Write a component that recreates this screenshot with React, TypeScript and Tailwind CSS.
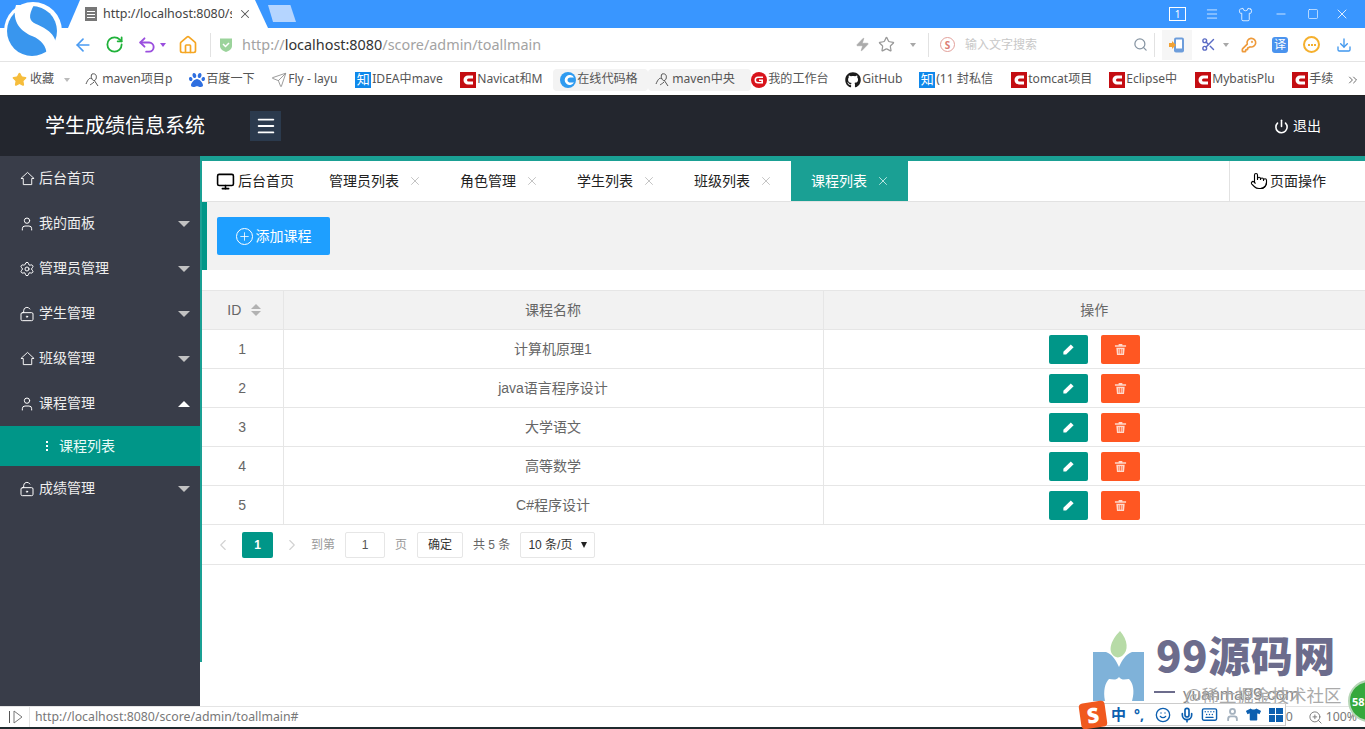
import type { ReactNode } from "react";
import {
  ArrowLeft,
  ChevronLeft,
  ChevronRight,
  ChevronsRight,
  Download,
  House,
  KeyRound,
  Keyboard,
  LockKeyholeOpen,
  Menu,
  Mic,
  Minus,
  Monitor,
  Plus,
  Pointer,
  Power,
  RotateCw,
  Scissors,
  Search,
  Send,
  Settings,
  Shirt,
  Smile,
  Square,
  Star,
  Undo2,
  User,
  X,
  Zap,
  ZoomIn,
} from "lucide-react";
import { FaGithub, FaPaw, FaTshirt } from "react-icons/fa";

const sans = "font-['Noto_Sans','Noto_Sans_CJK_SC',sans-serif]";

function Caret({ className = "border-t-[#a8a8a8]" }: { className?: string }) {
  return <span className={`block h-0 w-0 shrink-0 border-x-[3px] border-t-[4px] border-x-transparent ${className}`} />;
}

function SiteLogo() {
  return (
    <svg viewBox="0 0 66 62" className="absolute left-0 top-0 h-[62px] w-[66px]">
      <circle cx="33" cy="31" r="29" fill="#fff" />
      <circle cx="32" cy="31" r="25" fill="#3996ee" />
      <path
        d="M16 5C11 22 22 32 32 36c10 4 14 10 15 19l8-7c4-12-9-20-19-24-7-3-8-8-2-19z"
        fill="#fff"
      />
    </svg>
  );
}

function RedC() {
  return (
    <svg viewBox="0 0 16 16" className="h-4 w-4 shrink-0">
      <rect width="16" height="16" fill="#c40d12" />
      <path d="M13 3.500H8a4.500 4.500 0 0 0 0 9h5v-3H8.500a1.500 1.500 0 0 1 0-3H13z" fill="#fff" />
    </svg>
  );
}

function Zhi() {
  return (
    <span className="flex h-4 w-4 shrink-0 items-center justify-center bg-[#0f88eb] text-[13px] leading-none text-white">
      知
    </span>
  );
}

function Feather() {
  return (
    <svg viewBox="0 0 16 16" className="h-4 w-4 shrink-0" fill="none" stroke="#555" strokeWidth="1">
      <path d="M1 12c2-5 4-7 6-5M7 2c4-1 5 2 4 5-1 2-3 2-4 0s-1-4 0-5zM9 8l4 6M5 13c1-1 2-1 4-3" />
    </svg>
  );
}

function BlueC() {
  return (
    <svg viewBox="0 0 16 16" className="h-4 w-4 shrink-0">
      <circle cx="8" cy="8" r="8" fill="#2f9bf0" />
      <path d="M14 5.500A5 5 0 1 0 14 10.500h-3.200a2.600 2.600 0 1 1 0-5z" fill="#fff" />
    </svg>
  );
}

function RedG() {
  return (
    <svg viewBox="0 0 16 16" className="h-4 w-4 shrink-0">
      <circle cx="8" cy="8" r="8" fill="#d8141c" />
      <path d="M12 4.500H7a3.500 3.500 0 0 0 0 7h5V7.500H8v1.500h2.400v1H7a2 2 0 0 1 0-4h5z" fill="#fff" />
    </svg>
  );
}

function HomeOutline() {
  return (
    <svg viewBox="0 0 16 16" className="h-[15px] w-[15px]" fill="none" stroke="currentColor" strokeWidth="1">
      <path d="M8 1.500L1 8h2.500v6.500h9V8H15z" strokeLinejoin="round" />
    </svg>
  );
}

function EditIcon() {
  return (
    <svg viewBox="0 0 14 14" className="h-[13px] w-[13px]" fill="#fff">
      <path d="M9.500 1.500l3 3-8 8H1.500v-3z" />
    </svg>
  );
}

function TrashIcon() {
  return (
    <svg viewBox="0 0 14 14" className="h-[13px] w-[13px]">
      <path d="M1 2.500h12V4H1zM5 1h4v1.500H5z" fill="#ffd9cc" />
      <path d="M2.500 5h9l-.7 8H3.200z" fill="#ffd9cc" />
      <path d="M5.200 6.500v5M7 6.500v5M8.800 6.500v5" stroke="#ff5722" strokeWidth="0.800" />
    </svg>
  );
}

const bookmarks: { width: string; icon: ReactNode; label: string; pill?: boolean }[] = [
  { width: "w-[104px]", icon: <Feather />, label: "maven项目p" },
  { width: "w-[82px]", icon: <FaPaw className="h-4 w-4 shrink-0 text-[#2f6fe0]" />, label: "百度一下" },
  { width: "w-[84px]", icon: <Send className="h-4 w-4 shrink-0 text-[#888]" strokeWidth={1.25} />, label: "Fly - layu" },
  { width: "w-[105px]", icon: <Zhi />, label: "IDEA中mave" },
  { width: "w-[93px]", icon: <RedC />, label: "Navicat和M" },
  { width: "w-[95px]", icon: <BlueC />, label: "在线代码格", pill: true },
  { width: "w-[103px]", icon: <Feather />, label: "maven中央", pill: true },
  { width: "w-[94px]", icon: <RedG />, label: "我的工作台" },
  { width: "w-[74px]", icon: <FaGithub className="h-4 w-4 shrink-0 text-[#1b1b1b]" />, label: "GitHub" },
  { width: "w-[92px]", icon: <Zhi />, label: "(11 封私信" },
  { width: "w-[98px]", icon: <RedC />, label: "tomcat项目" },
  { width: "w-[86px]", icon: <RedC />, label: "Eclipse中" },
  { width: "w-[97px]", icon: <RedC />, label: "MybatisPlu" },
  { width: "w-[52px]", icon: <RedC />, label: "手续" },
];

function BrowserChrome() {
  return (
    <div className={`shrink-0 ${sans}`}>
      <div className="flex h-7 items-end bg-[#3996ff]">
        <div className="ml-[68px] flex h-7 w-[200px] items-center bg-white pl-[17px] pr-[17px] [clip-path:polygon(0_100%,6%_0,93.500%_0,100%_100%)]">
          <span className="flex h-[14px] w-[12px] shrink-0 flex-col justify-center gap-[2px] bg-[#777] px-[2px]">
            <span className="h-px bg-white" />
            <span className="h-px bg-white" />
            <span className="h-px bg-white" />
          </span>
          <span className="ml-[6px] w-[129px] shrink-0 overflow-hidden whitespace-nowrap text-[12.500px] text-[#444]">
            http://localhost:8080/score
          </span>
          <X className="ml-[6px] h-[14px] w-[14px] shrink-0 text-[#555]" strokeWidth={1.75} />
        </div>
        <span className="mb-[6px] h-[17px] w-[28px] bg-[#b5d5ff] [clip-path:polygon(0_0,80%_0,100%_100%,18%_100%)]" />
        <div className="mb-[7px] ml-auto flex h-[14px] items-center pr-[15px] text-white">
          <span className="flex h-[14px] w-[17px] items-center justify-center border border-white text-[10px] leading-none">
            1
          </span>
          <Menu className="ml-[19px] h-[14px] w-[14px]" strokeWidth={1.25} />
          <Shirt className="ml-[19px] h-[15px] w-[15px]" strokeWidth={1.25} />
          <Minus className="ml-[21px] h-[14px] w-[14px]" strokeWidth={1.25} />
          <Square className="ml-[19px] h-[12px] w-[12px]" strokeWidth={1.25} />
          <X className="ml-[15px] h-[16px] w-[16px]" strokeWidth={1.25} />
        </div>
      </div>

      <div className="flex h-[34px] items-center border-b border-[#e4e4e4] bg-white pl-[73px]">
        <ArrowLeft className="h-[20px] w-[20px] text-[#4a9bf2]" strokeWidth={2} />
        <RotateCw className="ml-[12px] h-[19px] w-[19px] text-[#20b23a]" strokeWidth={2.25} />
        <Undo2 className="ml-[13px] h-[20px] w-[20px] text-[#9a4ede]" strokeWidth={2.25} />
        <span className="ml-[3px]">
          <Caret className="border-t-[#9a4ede]" />
        </span>
        <House className="ml-[12px] h-[20px] w-[20px] text-[#f5a623]" strokeWidth={2} />
        <span className="ml-[12px] h-[24px] w-px bg-[#e2e2e2]" />
        <svg viewBox="0 0 16 16" className="ml-[7px] h-[16px] w-[16px] shrink-0">
          <path d="M2 1.500h12V9c0 3-3 5-6 6-3-1-6-3-6-6z" fill="#9bd39b" />
          <path d="M5 7l2.500 2.500L11 6" fill="none" stroke="#fff" strokeWidth="1.500" />
        </svg>
        <span className="ml-[8px] w-[300px] shrink-0 whitespace-nowrap text-[14.400px] text-[#a3a3a3]">
          http://<span className="text-[#333]">localhost:8080</span>/score/admin/toallmain
        </span>
        <Zap className="ml-[313px] h-[15px] w-[15px] fill-[#aaa] text-[#aaa]" strokeWidth={1} />
        <Star className="ml-[8px] h-[17px] w-[17px] text-[#999]" strokeWidth={1.75} />
        <span className="ml-[15px]">
          <Caret />
        </span>
        <span className="ml-[12px] h-[24px] w-px bg-[#e2e2e2]" />
        <span className="ml-[11px] flex h-[15px] w-[15px] items-center justify-center rounded-full border border-[#e2a09a] text-[10px] font-bold leading-none text-[#dc7d74]">
          S
        </span>
        <span className="ml-[10px] text-[12px] text-[#c8c8c8]">输入文字搜索</span>
        <Search className="ml-[96px] h-[15px] w-[15px] text-[#8795a3]" strokeWidth={2} />
        <span className="ml-[6px] h-[24px] w-px bg-[#e2e2e2]" />
        <span className="ml-[7px] flex h-[30px] w-[30px] items-center justify-center bg-[#f6f6f6]">
          <svg viewBox="0 0 16 16" className="h-[16px] w-[16px]">
            <rect x="5" y="0.500" width="10" height="15" rx="2" fill="#6d9ddb" />
            <rect x="7" y="2.500" width="6" height="9" fill="#fff" />
            <path d="M0 6h3V4l4 4-4 4v-2H0z" fill="#f1a236" />
          </svg>
        </span>
        <Scissors className="ml-[9px] h-[15px] w-[15px] text-[#5a6bc4]" strokeWidth={2.25} />
        <span className="ml-[7px]">
          <Caret />
        </span>
        <KeyRound className="ml-[12px] h-[16px] w-[16px] text-[#ee9a3a]" strokeWidth={2.5} />
        <span className="ml-[15px] flex h-[16px] w-[16px] items-center justify-center rounded-[3px] bg-[#4a93ee] text-[12px] leading-none text-white">
          译
        </span>
        <span className="ml-[15px] flex h-[17px] w-[17px] items-center justify-center gap-px rounded-full border-2 border-[#f5b02e]">
          <span className="h-[2px] w-[2px] bg-[#f5b02e]" />
          <span className="h-[2px] w-[2px] bg-[#f5b02e]" />
          <span className="h-[2px] w-[2px] bg-[#f5b02e]" />
        </span>
        <Download className="ml-[16px] h-[16px] w-[16px] text-[#3f97ee]" strokeWidth={2} />
      </div>

      <div className="flex h-[33px] items-center whitespace-nowrap bg-white pl-[12px] pt-[2px] text-[12.100px] text-[#555]">
        <Star className="h-[15px] w-[15px] shrink-0 fill-[#f6bd3c] text-[#f6bd3c]" />
        <span className="ml-[3px] shrink-0">收藏</span>
        <span className="ml-[10px] mr-[15px]">
          <Caret className="border-t-[#bbb]" />
        </span>
        {bookmarks.map((b) => (
          <div
            key={b.label}
            className={`${b.width} flex h-[22px] shrink-0 items-center gap-px overflow-hidden whitespace-nowrap ${
              b.pill ? "rounded-[4px] bg-[#f3f3f3] pl-[7px]" : ""
            }`}
          >
            {b.icon}
            <span>{b.label}</span>
          </div>
        ))}
        <ChevronsRight className="ml-[2px] h-[14px] w-[14px] shrink-0 text-[#555]" strokeWidth={1.5} />
      </div>
      <div className="h-px bg-[#222]" />
    </div>
  );
}

const sideItems: { label: string; icon: ReactNode; arrow?: "up" | "down" }[] = [
  { label: "后台首页", icon: <HomeOutline /> },
  { label: "我的面板", icon: <User className="h-[16px] w-[16px]" strokeWidth={1.5} />, arrow: "down" },
  { label: "管理员管理", icon: <Settings className="h-[16px] w-[16px]" strokeWidth={1.5} />, arrow: "down" },
  { label: "学生管理", icon: <LockKeyholeOpen className="h-[16px] w-[16px]" strokeWidth={1.5} />, arrow: "down" },
  { label: "班级管理", icon: <HomeOutline />, arrow: "down" },
  { label: "课程管理", icon: <User className="h-[16px] w-[16px]" strokeWidth={1.5} />, arrow: "up" },
];

function SideRow({ label, icon, arrow }: { label: string; icon: ReactNode; arrow?: "up" | "down" }) {
  return (
    <div className="flex h-[45px] items-center pl-[19px] pr-[10px] text-[14px] text-[#eee]">
      <span className="mr-[4px] flex w-[16px] justify-center text-white">{icon}</span>
      {label}
      {arrow === "down" && (
        <span className="ml-auto h-0 w-0 border-x-[6px] border-t-[6px] border-x-transparent border-t-[#c2c2c2]" />
      )}
      {arrow === "up" && (
        <span className="ml-auto h-0 w-0 border-x-[6px] border-b-[6px] border-x-transparent border-b-white" />
      )}
    </div>
  );
}

function Sidebar() {
  return (
    <aside className="w-[200px] shrink-0 bg-[#393d49]">
      {sideItems.map((item) => (
        <SideRow key={item.label} {...item} />
      ))}
      <div className="flex h-[40px] items-center bg-[#009688] pl-[46px] text-[14px] text-[#e8fbf8]">
        <span className="mr-[11px] flex flex-col gap-[2px]">
          <span className="h-[2px] w-[2px] bg-white" />
          <span className="h-[2px] w-[2px] bg-white" />
          <span className="h-[2px] w-[2px] bg-white" />
        </span>
        课程列表
      </div>
      <SideRow label="成绩管理" icon={<LockKeyholeOpen className="h-[16px] w-[16px]" strokeWidth={1.5} />} arrow="down" />
    </aside>
  );
}

const tabs: { label: string; width: string }[] = [
  { label: "管理员列表", width: "w-[131px]" },
  { label: "角色管理", width: "w-[117px]" },
  { label: "学生列表", width: "w-[117px]" },
  { label: "班级列表", width: "w-[97px]" },
];

function TabBar() {
  return (
    <div className="flex h-[41px] items-stretch border-b border-[#e2e2e2] text-[14px] text-[#222]">
      <div className="flex w-[127px] items-center pl-[14px]">
        <Monitor className="mr-[3px] h-[19px] w-[19px] text-black" strokeWidth={2} />
        后台首页
      </div>
      {tabs.map((t) => (
        <div key={t.label} className={`flex ${t.width} items-center`}>
          <span>{t.label}</span>
          <X className="ml-[9px] h-[14px] w-[14px] text-[#bbb]" strokeWidth={1.5} />
        </div>
      ))}
      <div className="flex w-[117px] items-center bg-[#1aa094] pl-[20px] text-white">
        课程列表
        <X className="ml-[9px] h-[14px] w-[14px] text-[#cdeee9]" strokeWidth={1.5} />
      </div>
      <div className="ml-auto flex w-[136px] items-center border-l border-[#e2e2e2] pl-[20px]">
        <Pointer className="mr-[2px] h-[18px] w-[18px] text-black" strokeWidth={1.5} />
        页面操作
      </div>
    </div>
  );
}

const courses = [
  { id: 1, name: "计算机原理1" },
  { id: 2, name: "java语言程序设计" },
  { id: 3, name: "大学语文" },
  { id: 4, name: "高等数学" },
  { id: 5, name: "C#程序设计" },
];

function CourseTable() {
  return (
    <table className="w-full table-fixed border-collapse text-center text-[14px] text-[#666]">
      <colgroup>
        <col className="w-[81px]" />
        <col className="w-[540px]" />
        <col />
      </colgroup>
      <thead>
        <tr className="h-[39px] border-y border-[#e6e6e6] bg-[#f2f2f2]">
          <th className="border-r border-[#e6e6e6] font-normal">
            <span className="ml-[4px] inline-flex items-center gap-[10px]">
              ID
              <span className="flex flex-col gap-[2px]">
                <span className="h-0 w-0 border-x-[5px] border-b-[5px] border-x-transparent border-b-[#b2b2b2]" />
                <span className="h-0 w-0 border-x-[5px] border-t-[5px] border-x-transparent border-t-[#b2b2b2]" />
              </span>
            </span>
          </th>
          <th className="border-r border-[#e6e6e6] font-normal">课程名称</th>
          <th className="font-normal">操作</th>
        </tr>
      </thead>
      <tbody>
        {courses.map((c) => (
          <tr key={c.id} className="h-[39px] border-b border-[#e6e6e6]">
            <td className="border-r border-[#e6e6e6]">{c.id}</td>
            <td className="border-r border-[#e6e6e6]">{c.name}</td>
            <td>
              <div className="flex items-center justify-center gap-[13px]">
                <span className="flex h-[29px] w-[39px] items-center justify-center rounded-[2px] bg-[#009688]">
                  <EditIcon />
                </span>
                <span className="flex h-[29px] w-[39px] items-center justify-center rounded-[2px] bg-[#ff5722]">
                  <TrashIcon />
                </span>
              </div>
            </td>
          </tr>
        ))}
      </tbody>
    </table>
  );
}

function Pagination() {
  return (
    <div className="flex h-[40px] items-center border-b border-[#e6e6e6] pl-[12px] text-[12px] text-[#999]">
      <ChevronLeft className="h-[18px] w-[18px] text-[#d2d2d2]" strokeWidth={1.5} />
      <span className="ml-[10px] flex h-[26px] w-[31px] items-center justify-center rounded-[2px] bg-[#009688] font-bold text-white">
        1
      </span>
      <ChevronRight className="ml-[10px] h-[18px] w-[18px] text-[#d2d2d2]" strokeWidth={1.5} />
      <span className="ml-[10px]">到第</span>
      <span className="ml-[10px] flex h-[26px] w-[40px] items-center justify-center rounded-[2px] border border-[#e6e6e6] text-[#555]">
        1
      </span>
      <span className="ml-[10px]">页</span>
      <span className="ml-[10px] flex h-[26px] w-[46px] items-center justify-center rounded-[2px] border border-[#e6e6e6] text-[#333]">
        确定
      </span>
      <span className="ml-[10px] text-[#666]">共 5 条</span>
      <span className="ml-[10px] flex h-[26px] w-[75px] items-center rounded-[2px] border border-[#e6e6e6] pl-[7px] text-[#333]">
        10 条/页
        <span className="ml-auto mr-[7px] h-0 w-0 border-x-[3.500px] border-t-[6px] border-x-transparent border-t-[#222]" />
      </span>
    </div>
  );
}

function Watermark() {
  return (
    <div className="pointer-events-none absolute bottom-[1px] right-0 h-[97px] w-[273px]">
      <svg viewBox="0 0 54 76" className="absolute left-0 top-0 h-[76px] w-[54px]">
        <path d="M28 0c8 9 9 20 2 25-2 1-4 2-6 1C15 22 18 10 28 0z" fill="#b7dba7" />
        <path d="M1 21h13c6 2 10 8 13 15 3-7 7-13 13-15h12v49H1z" fill="#7fb2d9" />
        <path d="M13 70c-2-10 0-18 4-22 3 0 7 2 10-2 3 4 7 2 10 2 4 4 6 12 3 22z" fill="#fff" />
      </svg>
      <span className="absolute left-[64px] top-[-2px] whitespace-nowrap font-['Noto_Sans_CJK_SC',sans-serif] text-[42px] font-black leading-[50px] tracking-[0.5px] text-[#6c6c8c]">
        99源码网
      </span>
      <span className="absolute left-[62px] top-[60px] h-[2px] w-[21px] bg-[#6c6c8c]" />
      <span className="absolute left-[91px] top-[52px] whitespace-nowrap text-[17px] leading-[24px] text-[#888]">
        yuanma99.com
      </span>
      <span className="absolute left-[93px] top-[52px] whitespace-nowrap font-['Noto_Sans_CJK_SC',sans-serif] text-[17.500px] leading-[24px] text-[#aaa]">
        @稀土掘金技术社区
      </span>
    </div>
  );
}

function StatusBar() {
  return (
    <div className={`relative flex h-[21px] shrink-0 items-center border-t border-[#e4e4e4] bg-white text-[12.300px] text-[#777] ${sans}`}>
      <span className="ml-[9px] h-[12px] w-px bg-[#555]" />
      <svg viewBox="0 0 10 14" className="ml-[3px] h-[14px] w-[10px]" fill="none" stroke="#777" strokeWidth="1">
        <path d="M1 1l8 6-8 6z" />
      </svg>
      <span className="ml-[6px] h-[20px] w-px bg-[#e4e4e4]" />
      <span className="ml-[5px]">http://localhost:8080/score/admin/toallmain#</span>
      <div className="ml-auto flex items-center pr-[8px] text-[#777]">
        <span className="mr-[15px]">0</span>
        <ZoomIn className="h-[15px] w-[15px]" strokeWidth={1.5} />
        <span className="ml-[3px]">100%</span>
      </div>
      <div className="absolute left-[1098px] top-[-4px] flex h-[23px] w-[188px] items-center border border-[#ccc] bg-white pl-[12px] text-[#0c5fb0]">
        <span className="text-[15px] font-bold leading-none">中</span>
        <span className="ml-[8px] text-[14px] font-bold leading-none">°,</span>
        <Smile className="ml-[11px] h-[16px] w-[16px]" strokeWidth={2} />
        <Mic className="ml-[8px] h-[16px] w-[16px]" strokeWidth={2.5} />
        <Keyboard className="ml-[6px] h-[17px] w-[17px]" strokeWidth={2} />
        <User className="ml-[7px] h-[15px] w-[15px] text-[#a5b2bf]" strokeWidth={3} />
        <FaTshirt className="ml-[6px] h-[15px] w-[15px]" />
        <span className="ml-[8px] grid h-[14px] w-[14px] grid-cols-2 gap-px">
          <span className="bg-[#0c5fb0]" />
          <span className="bg-[#0c5fb0]" />
          <span className="bg-[#0c5fb0]" />
          <span className="bg-[#0c5fb0]" />
        </span>
      </div>
      <span className="absolute left-[1080px] top-[-5px] flex h-[26px] w-[26px] rotate-[-8deg] items-center justify-center rounded-[4px] bg-[#f0591f] text-[21px] font-black leading-none text-white">
        S
      </span>
      <span className="absolute left-[1348px] top-[-27px] flex h-[42px] w-[42px] items-center rounded-full border-2 border-[#b7d6b7] bg-[#35a83c] pl-[2px] text-[11px] font-bold leading-none text-white">
        58
      </span>
    </div>
  );
}

export default function App() {
  return (
    <div className="relative flex h-[729px] w-[1365px] flex-col overflow-hidden bg-white font-['Liberation_Sans','Noto_Sans_CJK_SC',sans-serif]">
      <BrowserChrome />
      <SiteLogo />

      <header className="flex h-[60px] shrink-0 items-center bg-[#23262e] text-white">
        <span className="ml-[45px] text-[20px]">学生成绩信息系统</span>
        <span className="ml-[45px] flex h-[30px] w-[31px] items-center justify-center bg-[#2b3a4d]">
          <Menu className="h-[22px] w-[22px]" strokeWidth={2} />
        </span>
        <span className="ml-auto mr-[44px] flex items-center gap-[4px] text-[14px]">
          <Power className="h-[15px] w-[15px]" strokeWidth={2.5} />
          退出
        </span>
      </header>

      <div className="flex min-h-0 flex-1">
        <Sidebar />
        <main className="min-w-0 flex-1">
          <div className="h-[506px] border-l-[2px] border-t-[5px] border-[#1aa094]">
            <TabBar />
            <div className="flex h-[68px] items-center border-l-[5px] border-[#009688] bg-[#f2f2f2] pl-[10px]">
              <span className="flex h-[38px] w-[113px] items-center justify-center gap-[3px] rounded-[2px] bg-[#1e9fff] text-[14px] text-white">
                <span className="flex h-[17px] w-[17px] items-center justify-center rounded-full border border-white">
                  <Plus className="h-[13px] w-[13px]" strokeWidth={1.5} />
                </span>
                添加课程
              </span>
            </div>
            <div className="h-[20px]" />
            <CourseTable />
            <Pagination />
          </div>
        </main>
      </div>

      <Watermark />
      <StatusBar />
      <div className="h-[2px] shrink-0 bg-[#1f2a2e]" />
    </div>
  );
}
